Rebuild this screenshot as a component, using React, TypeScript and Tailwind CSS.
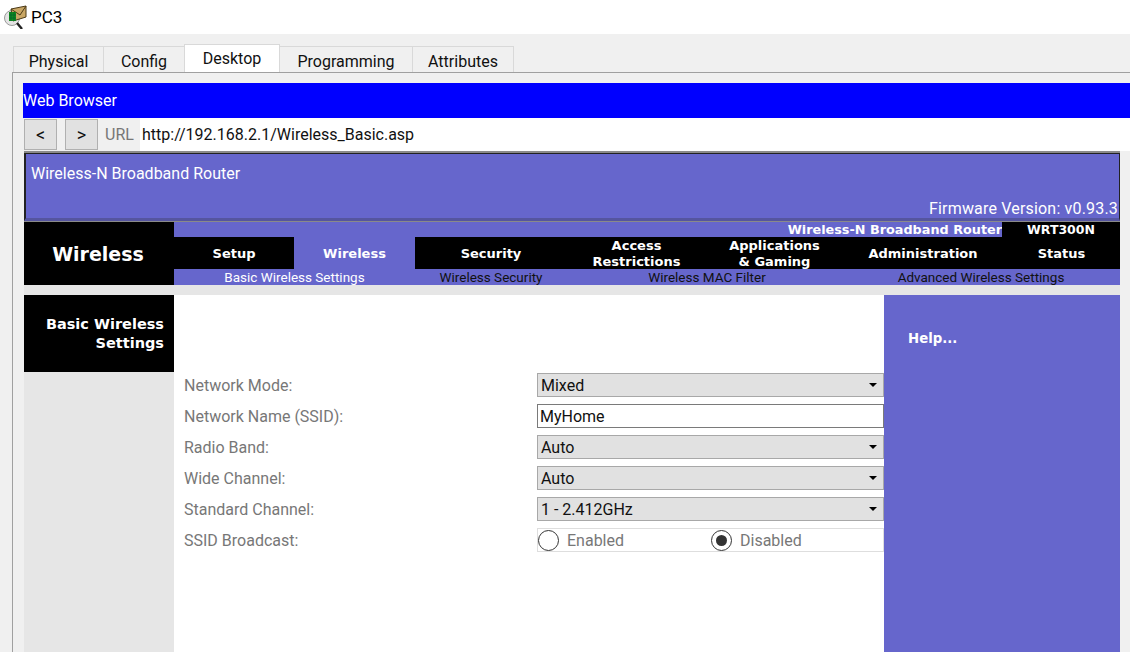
const sans = "font-['Roboto','Noto_Sans',sans-serif]";
const bold = "font-['DejaVu_Sans',sans-serif] font-bold";

const tabs = [
  { name: "Physical", width: "w-[91px]" },
  { name: "Config", width: "w-[82px]" },
  { name: "Desktop", width: "w-[96px]", active: true },
  { name: "Programming", width: "w-[134px]" },
  { name: "Attributes", width: "w-[102px]" },
];

const PcIcon = () => (
  <svg width="26" height="26" viewBox="0 0 26 26" className="mb-[3px] shrink-0">
    <circle cx="10" cy="15" r="7.5" fill="#e4e4e4" stroke="#9a9a9a" />
    <path d="M15 20l5 6" stroke="#222" strokeWidth="2.4" />
    <path d="M9 6l15-3v11l-13 4z" fill="#c9a765" stroke="#4c3a17" />
    <path d="M9 6l9 6 6-9" fill="none" stroke="#4c3a17" />
    <path d="M7 9h7v9H7z" fill="#128a1c" />
    <path d="M9 9v9M12 9v9M7 12h7M7 15h7" stroke="#063" strokeWidth="0.8" />
  </svg>
);

const Tab = ({ name, width, active }: { name: string; width: string; active?: boolean }) => (
  <div
    className={`${width} ${
      active ? "h-[28px] bg-white pt-[1px] z-10 -mr-px" : "h-[26px] pt-[4px] bg-[#f0f0f0] -mr-px"
    } flex items-center justify-center border border-b-0 border-[#d9d9d9] text-[16px] text-[#111]`}
  >
    {name}
  </div>
);

const NavItem = ({ width, children, active }: { width: string; children: React.ReactNode; active?: boolean }) => (
  <div
    className={`${width} ${
      active ? "bg-[#6666cc]" : "bg-black"
    } flex items-center justify-center pt-px text-center text-[13px] leading-[16px] text-white ${bold}`}
  >
    {children}
  </div>
);

const Select = ({ value }: { value: string }) => (
  <div className="flex h-[24px] items-center justify-between border border-[#a8a8a8] bg-[#e1e1e1] pl-[3px] pr-[5px] text-[16px] text-[#111]">
    <span className="pt-px">{value}</span>
    <span className="mr-px h-0 w-0 border-x-[4px] border-t-[4px] border-x-transparent border-t-black" />
  </div>
);

const Row = ({ label, children }: { label: string; children: React.ReactNode }) => (
  <div className="flex h-[24px] items-center">
    <div className="w-[353px] pt-px text-[16px] text-[#777]">{label}</div>
    <div className="w-[347px]">{children}</div>
  </div>
);

const Radio = ({ label, checked, width }: { label: string; checked?: boolean; width: string }) => (
  <div className={`${width} flex items-center gap-[8px] text-[16px] text-[#777]`}>
    <span className="flex h-[21px] w-[21px] items-center justify-center rounded-full border border-[#333] bg-white">
      {checked && <span className="h-[11px] w-[11px] rounded-full bg-[#333]" />}
    </span>
    <span className="pt-px">{label}</span>
  </div>
);

export default function App() {
  return (
    <div className={`flex h-[652px] w-[1130px] flex-col overflow-hidden bg-[#f0f0f0] ${sans}`}>
      {/* title bar */}
      <div className="flex h-[34px] items-center gap-[3px] bg-white pl-[2px] text-[17px] text-black">
        <PcIcon />
        <span className="pt-px">PC3</span>
      </div>

      {/* tabs */}
      <div className="flex h-[38px] items-end pl-[13px]">
        {tabs.map((t) => (
          <Tab key={t.name} name={t.name} width={t.width} active={t.active} />
        ))}
      </div>

      <div className="flex flex-1 flex-col border-l border-t border-[#a0a0a0] bg-[#f0f0f0] ml-[12px] pl-[10px] pt-[10px] min-h-0">
        <div className="flex h-[35px] items-center bg-[#0000ff] text-[16px] text-white">Web Browser</div>

        {/* url row */}
        <div className="flex h-[33px] items-stretch bg-[#f0f0f0] pl-[1px]">
          <button className="my-px h-[31px] w-[33px] border border-[#b0b0b0] bg-[#e1e1e1] text-[18px] text-[#111]">&lt;</button>
          <button className="my-px ml-[8px] h-[31px] w-[33px] border border-[#b0b0b0] bg-[#e1e1e1] text-[18px] text-[#111]">&gt;</button>
          <div className="flex w-[42px] items-center pl-[7px] pt-px text-[16px] text-[#777]">URL</div>
          <div className="flex flex-1 items-center bg-white pl-[2px] pt-px text-[16px] text-[#111]">http://192.168.2.1/Wireless_Basic.asp</div>
        </div>

        {/* page */}
        <div className="ml-[1px] flex w-[1096px] flex-1 flex-col border-t-2 border-[#8a8a8a] min-h-0">
          <div className="flex h-[68px] flex-col justify-between border-l-2 border-r border-t border-[#222] border-b-[3px] border-b-[#55559f] bg-[#6666cc] text-white">
            <div className="pl-[5px] pt-[8px] text-[16px] leading-[24px]">Wireless-N Broadband Router</div>
            <div className="-mb-[2px] pr-[1px] text-right text-[16px] leading-[22px] tracking-[0.18px]">Firmware Version: v0.93.3</div>
          </div>
          <div className="h-px bg-[#8a8a8a]" />

          {/* nav */}
          <div className="flex h-[63px]">
            <div className={`flex w-[150px] items-center justify-center bg-black pt-px pr-[2px] text-[19px] text-white ${bold}`}>Wireless</div>
            <div className="flex flex-1 flex-col">
              <div className="flex h-[15px] bg-[#6666cc]">
                <div className={`flex-1 text-right text-[12.8px] leading-[15px] text-white ${bold}`}>Wireless-N Broadband Router</div>
                <div className={`w-[118px] bg-black text-center text-[12.5px] leading-[15px] text-white ${bold}`}>WRT300N</div>
              </div>
              <div className="flex h-[32px]">
                <NavItem width="w-[120px]">Setup</NavItem>
                <NavItem width="w-[121px]" active>Wireless</NavItem>
                <NavItem width="w-[152px]">Security</NavItem>
                <NavItem width="w-[139px]">Access<br />Restrictions</NavItem>
                <NavItem width="w-[137px]">Applications<br />&amp; Gaming</NavItem>
                <NavItem width="w-[160px]">Administration</NavItem>
                <NavItem width="w-[117px]">Status</NavItem>
              </div>
              <div className="flex h-[16px] bg-[#6666cc] text-[13.5px] leading-[16px] text-[#111]">
                <div className="w-[241px] text-center text-white">Basic Wireless Settings</div>
                <div className="w-[152px] text-center">Wireless Security</div>
                <div className="w-[279px] pl-[1px] text-center">Wireless MAC Filter</div>
                <div className="flex-1 pr-[4px] text-center">Advanced Wireless Settings</div>
              </div>
            </div>
          </div>

          <div className="h-[10px] bg-[#e6e6e6]" />

          {/* content */}
          <div className="flex flex-1 min-h-0">
            <div className="w-[150px] bg-[#e6e6e6]">
              <div className={`flex h-[77px] flex-col bg-black pr-[10px] pt-[20px] text-right text-[14.5px] leading-[19px] text-white ${bold}`}>
                <span>Basic Wireless</span>
                <span>Settings</span>
              </div>
            </div>
            <div className="flex w-[710px] flex-col gap-[7px] bg-white pl-[10px] pt-[78px]">
              <Row label="Network Mode:"><Select value="Mixed" /></Row>
              <Row label="Network Name (SSID):">
                <div className="flex h-[24px] items-center border border-[#7a7a7a] bg-white pl-[2px] pt-px text-[16px] text-[#111]">MyHome</div>
              </Row>
              <Row label="Radio Band:"><Select value="Auto" /></Row>
              <Row label="Wide Channel:"><Select value="Auto" /></Row>
              <Row label="Standard Channel:"><Select value="1 - 2.412GHz" /></Row>
              <Row label="SSID Broadcast:">
                <div className="flex h-[24px] items-center border border-[#dedede] bg-white">
                  <Radio label="Enabled" width="w-[173px]" />
                  <Radio label="Disabled" checked width="w-[170px]" />
                </div>
              </Row>
            </div>
            <div className={`flex-1 bg-[#6666cc] pl-[24px] pt-[35px] text-[13.3px] leading-[18px] text-white ${bold}`}>Help...</div>
          </div>
        </div>
      </div>
    </div>
  );
}
